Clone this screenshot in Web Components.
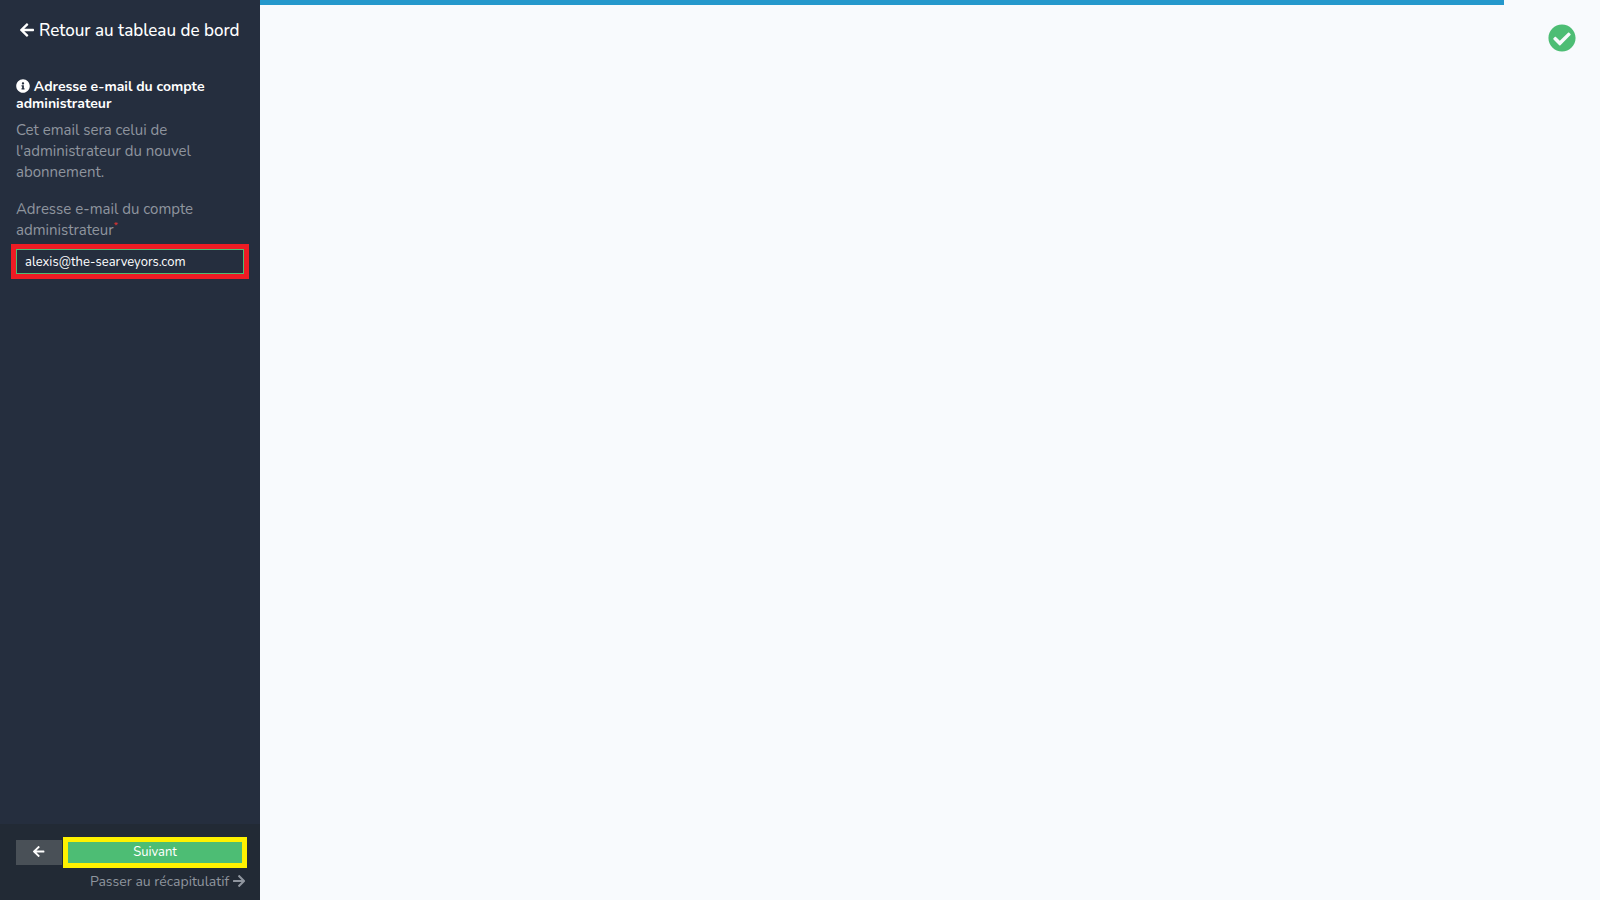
<!DOCTYPE html>
<html lang="fr">
<head>
<meta charset="utf-8">
<title>Nouvel abonnement</title>
<style>
    body {
        margin: 0;
        background: #f8fafd;
        font-family: Nunito, Lato, sans-serif;
        font-size: 15px;
        line-height: 21px;
    }
</style>
</head>
<body>
<wizard-page>
    <wizard-sidebar slot="sidebar">
        <back-link slot="header">Retour au tableau de bord</back-link>
        <step-info heading="Adresse e-mail du compte administrateur">Cet email sera celui de l'administrateur du nouvel abonnement.</step-info>
        <email-field label="Adresse e-mail du compte administrateur" value="alexis@the-searveyors.com"></email-field>
        <wizard-nav slot="footer"></wizard-nav>
    </wizard-sidebar>
    <progress-line style="--done: 92.85%"></progress-line>
    <step-status></step-status>
</wizard-page>

<script>
const ICONS = {
    left: { box: "0 0 448 512", path: "M257.500 445.100l-22.200 22.200c-9.400 9.400-24.600 9.400-33.900 0L7 273c-9.400-9.400-9.400-24.600 0-33.900L201.400 44.700c9.400-9.400 24.600-9.400 33.900 0l22.200 22.200c9.500 9.500 9.300 25-.4 34.300L136.600 216H424c13.300 0 24 10.700 24 24v32c0 13.300-10.700 24-24 24H136.600l120.500 114.800c9.800 9.300 10 24.800.4 34.300z" },
    right: { box: "0 0 448 512", path: "M190.500 66.900l22.200-22.200c9.400-9.400 24.600-9.400 33.900 0L441 239c9.400 9.400 9.400 24.600 0 33.900L246.600 467.300c-9.400 9.400-24.600 9.400-33.900 0l-22.200-22.200c-9.500-9.500-9.300-25 .4-34.300L311.400 296H24c-13.300 0-24-10.700-24-24v-32c0-13.300 10.700-24 24-24h287.400L190.900 101.200c-9.800-9.300-10-24.800-.4-34.300z" },
    info: { box: "0 0 512 512", path: "M256 8C119 8 8 119.100 8 256c0 137 111 248 248 248s248-111 248-248C504 119.100 393 8 256 8zm0 110c23.200 0 42 18.800 42 42s-18.800 42-42 42-42-18.800-42-42 18.800-42 42-42zm56 254c0 6.600-5.400 12-12 12h-88c-6.600 0-12-5.400-12-12v-24c0-6.600 5.400-12 12-12h12v-64h-12c-6.600 0-12-5.400-12-12v-24c0-6.600 5.400-12 12-12h64c6.600 0 12 5.400 12 12v100h12c6.600 0 12 5.400 12 12v24z" },
    check: { box: "0 0 512 512", path: "M504 256c0 137-111 248-248 248S8 393 8 256 119 8 256 8s248 111 248 248zM227.300 387.300l184-184c6.200-6.200 6.200-16.400 0-22.600l-22.600-22.600c-6.200-6.200-16.400-6.200-22.600 0L216 308.100l-70.100-70.100c-6.200-6.200-16.400-6.200-22.600 0l-22.600 22.600c-6.200 6.200-6.200 16.400 0 22.600l104 104c6.200 6.300 16.400 6.300 22.600.1z" }
};

class UiIcon extends HTMLElement {

    constructor() {
        super();
        this.shadowDOM = this.attachShadow({ mode: "open" });
    }
    connectedCallback() {
        const icon = ICONS[this.getAttribute("name")];
        this.shadowDOM.innerHTML = `
        <style>
        :host {
            display: inline-block;
            height: var(--icon-size, 16px);
            vertical-align: -2px;
        }
        svg {
            display: block;
            height: 100%;
            fill: currentColor;
        }
        </style>
        <svg viewBox="${icon.box}" aria-hidden="true"><path d="${icon.path}"/></svg>
        `;
    }
}

class WizardPage extends HTMLElement {

    constructor() {
        super();
        this.attachShadow({ mode: "open" }).innerHTML = `
        <style>
        :host {
            display: grid;
            grid-template-columns: 260px 1fr;
            min-height: 100vh;
        }
        main {
            display: flex;
            flex-direction: column;
        }
        </style>
        <slot name="sidebar"></slot>
        <main><slot></slot></main>
        `;
    }
}

class WizardSidebar extends HTMLElement {

    constructor() {
        super();
        this.attachShadow({ mode: "open" }).innerHTML = `
        <style>
        :host {
            display: flex;
            flex-direction: column;
            background: #252e3e;
            color: #8f959e;
        }
        header {
            padding: 20px 16px;
            text-align: center;
        }
        section {
            flex: 1;
            padding: 16px;
        }
        footer {
            padding: 13px 13px 8px 16px;
            background: #222a35;
        }
        </style>
        <header><slot name="header"></slot></header>
        <section><slot></slot></section>
        <footer><slot name="footer"></slot></footer>
        `;
    }
}

class BackLink extends HTMLElement {

    constructor() {
        super();
        this.attachShadow({ mode: "open" }).innerHTML = `
        <style>
        :host {
            display: block;
        }
        a {
            color: #fff;
            font-size: 17px;
            font-weight: 500;
            text-decoration: none;
        }
        </style>
        <a href="#"><ui-icon name="left"></ui-icon> <slot></slot></a>
        `;
    }
}

class StepInfo extends HTMLElement {

    constructor() {
        super();
        this.shadowDOM = this.attachShadow({ mode: "open" });
    }
    connectedCallback() {
        this.shadowDOM.innerHTML = `
        <style>
        :host {
            display: block;
        }
        h2 {
            --icon-size: 14px;
            margin: 0 0 8px;
            color: #fff;
            font-size: 14px;
            font-weight: 700;
            line-height: 17px;
        }
        p {
            margin: 0 0 16px;
        }
        </style>
        <h2><ui-icon name="info"></ui-icon> ${this.getAttribute("heading")}</h2>
        <p><slot></slot></p>
        `;
    }
}

class EmailField extends HTMLElement {

    constructor() {
        super();
        this.shadowDOM = this.attachShadow({ mode: "open" });
    }
    connectedCallback() {
        this.shadowDOM.innerHTML = `
        <style>
        :host {
            display: block;
        }
        label {
            display: block;
            margin-bottom: 8px;
        }
        sup {
            color: #e3342f;
            font-size: 10px;
            line-height: 0;
        }
        input {
            display: block;
            box-sizing: border-box;
            width: 100%;
            height: 25px;
            padding: 0 8px;
            border: 1px solid #4dbd74;
            border-radius: 0;
            outline: 5px solid #ed1c24;
            background: #252e3e;
            color: #fff;
            font: inherit;
            font-size: 13px;
        }
        </style>
        <label for="email">${this.getAttribute("label")}<sup>*</sup></label>
        <input id="email" type="email" required value="${this.getAttribute("value")}">
        `;
    }
}

class WizardNav extends HTMLElement {

    constructor() {
        super();
        this.attachShadow({ mode: "open" }).innerHTML = `
        <style>
        :host {
            display: block;
        }
        .buttons {
            display: flex;
            align-items: center;
            gap: 1px;
        }
        button {
            padding: 0;
            border: 0;
            color: #fff;
            font: inherit;
            font-size: 13px;
        }
        .prev {
            --icon-size: 13px;
            width: 46px;
            height: 25px;
            background: #495057;
        }
        .next {
            flex: 1;
            height: 31px;
            border: 5px solid #fff200;
            background: #4dbd74;
        }
        .skip {
            --icon-size: 14px;
            display: block;
            margin-top: 3px;
            padding-right: 2px;
            color: #8f959e;
            font-size: 14px;
            text-align: right;
            text-decoration: none;
        }
        </style>
        <div class="buttons">
            <button class="prev" type="button" aria-label="Retour"><ui-icon name="left"></ui-icon></button>
            <button class="next" type="button">Suivant</button>
        </div>
        <a class="skip" href="#">Passer au récapitulatif <ui-icon name="right"></ui-icon></a>
        `;
    }
}

class ProgressLine extends HTMLElement {

    constructor() {
        super();
        this.attachShadow({ mode: "open" }).innerHTML = `
        <style>
        :host {
            display: block;
            height: 5px;
        }
        div {
            width: var(--done);
            height: 100%;
            background: #2598cc;
        }
        </style>
        <div></div>
        `;
    }
}

class StepStatus extends HTMLElement {

    constructor() {
        super();
        this.attachShadow({ mode: "open" }).innerHTML = `
        <style>
        :host {
            --icon-size: 28px;
            display: flex;
            justify-content: flex-end;
            padding: 19px 24px;
            color: #4dbd74;
        }
        ui-icon {
            border-radius: 50%;
        }
        </style>
        <ui-icon name="check"></ui-icon>
        `;
    }
}

customElements.define("ui-icon", UiIcon);
customElements.define("wizard-page", WizardPage);
customElements.define("wizard-sidebar", WizardSidebar);
customElements.define("back-link", BackLink);
customElements.define("step-info", StepInfo);
customElements.define("email-field", EmailField);
customElements.define("wizard-nav", WizardNav);
customElements.define("progress-line", ProgressLine);
customElements.define("step-status", StepStatus);
</script>
</body>
</html>
